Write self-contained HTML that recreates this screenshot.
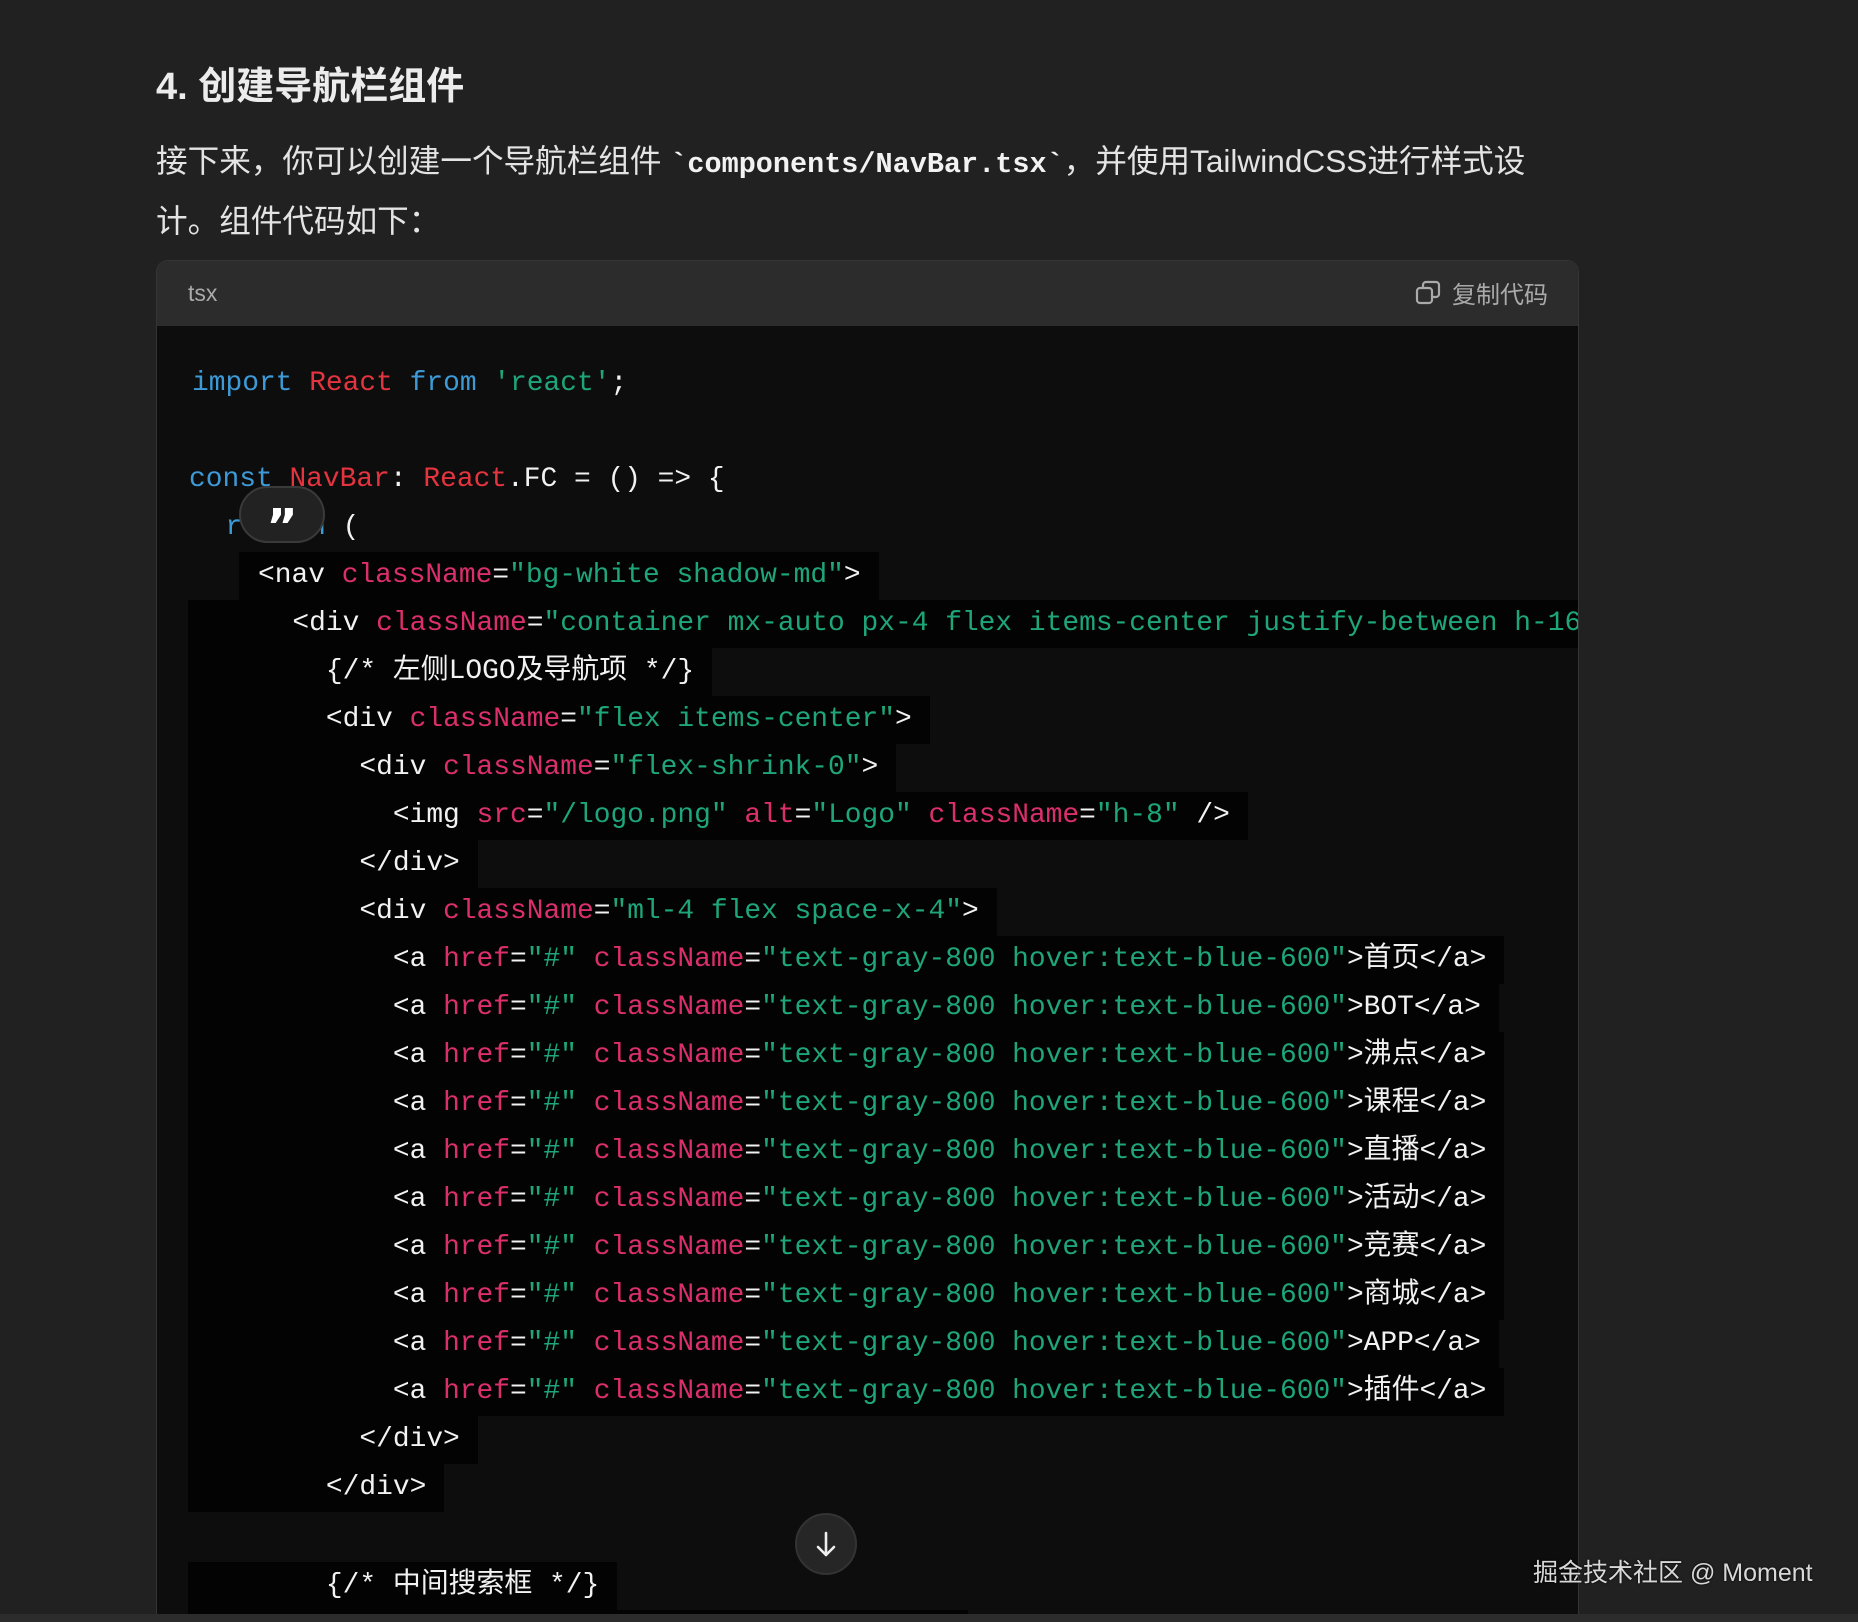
<!DOCTYPE html>
<html style="width:1858px;height:1622px;overflow:hidden"><head><meta charset="utf-8"><style>
*{margin:0;padding:0;box-sizing:border-box}
body{width:1858px;height:1622px;background:#212121;overflow:hidden;position:relative;font-family:"Liberation Sans","Noto Sans CJK SC",sans-serif;color:#e8e8e8}
h1{position:absolute;left:156px;top:64px;font-size:38px;font-weight:bold;color:#ececec;line-height:46px}
.p{position:absolute;left:156px;top:133px;width:1420px;font-size:31.6px;line-height:56px;color:#e4e4e4}
.p code{font-family:"Liberation Mono",monospace;font-weight:bold;font-size:28.5px;color:#f2f2f2}
.blk{position:absolute;left:156px;top:260px;width:1423px;height:1354px;border:1px solid #353535;border-bottom:none;border-radius:12px 12px 0 0;background:#0d0d0d;overflow:hidden}
.hd{height:65px;background:#2c2c2c;position:relative}
.hd .l{position:absolute;left:31px;top:19px;font-size:23px;color:#aaa}
.hd .r{position:absolute;right:30px;top:14px;font-size:24px;color:#aaa;display:flex;align-items:center;gap:10px}
.ln{position:absolute;height:48px;line-height:48px;font-family:"Liberation Mono","Noto Sans CJK SC",monospace;font-size:27.9px;white-space:pre;color:#f2f2f2;padding-left:4px;padding-right:18px}
.bg{background:#030303}
.k{color:#3d9ad6}.r1{color:#e3343f}.a{color:#db2f6b}.s{color:#1ea67a}
.wm{position:absolute;left:1533px;top:1553px;font-size:25px;color:#d8d8d8;text-shadow:0 0 2px #000}
</style></head><body>
<h1>4. 创建导航栏组件</h1>
<div class="p">接下来，你可以创建一个导航栏组件 <code>`components/NavBar.tsx`</code>，并使用TailwindCSS进行样式设计。组件代码如下：</div>
<div class="blk">
<div class="hd"><span class="l">tsx</span><span class="r"><svg width="28" height="28" viewBox="0 0 28 28" fill="none" stroke="#aaa" stroke-width="2.2"><rect x="3" y="9" width="15" height="15" rx="3"/><path d="M9 9V6a3 3 0 0 1 3-3h10a3 3 0 0 1 3 3v9a3 3 0 0 1-3 3h-4"/></svg>复制代码</span></div>
</div>
<div style="position:absolute;left:157px;top:326px;width:1421px;height:1288px;overflow:hidden">
<div style="position:relative;left:-157px;top:-322px">
<div class="ln" style="left:188px;top:356px"><span class="k">import</span> <span class="r1">React</span> <span class="k">from</span> <span class="s">'react'</span>;</div>
<div class="ln" style="left:185px;top:452px"><span class="k">const</span> <span class="r1">NavBar</span>: <span class="r1">React</span>.FC = () =&gt; {</div>
<div class="ln" style="left:188px;top:500px">  <span class="k">return</span> (</div>
<div class="ln bg" style="left:239px;top:548px;padding-left:19px">&lt;nav <span class="a">className</span>=<span class="s">"bg-white shadow-md"</span>&gt;</div>
<div class="ln bg" style="left:188px;top:596px;width:1400px">      &lt;div <span class="a">className</span>=<span class="s">"container mx-auto px-4 flex items-center justify-between h-16"</span>&gt;</div>
<div class="ln bg" style="left:188px;top:644px">        {/* 左侧LOGO及导航项 */}</div>
<div class="ln bg" style="left:188px;top:692px">        &lt;div <span class="a">className</span>=<span class="s">"flex items-center"</span>&gt;</div>
<div class="ln bg" style="left:188px;top:740px">          &lt;div <span class="a">className</span>=<span class="s">"flex-shrink-0"</span>&gt;</div>
<div class="ln bg" style="left:188px;top:788px">            &lt;img <span class="a">src</span>=<span class="s">"/logo.png"</span> <span class="a">alt</span>=<span class="s">"Logo"</span> <span class="a">className</span>=<span class="s">"h-8"</span> /&gt;</div>
<div class="ln bg" style="left:188px;top:836px">          &lt;/div&gt;</div>
<div class="ln bg" style="left:188px;top:884px">          &lt;div <span class="a">className</span>=<span class="s">"ml-4 flex space-x-4"</span>&gt;</div>
<div class="ln bg" style="left:188px;top:932px">            &lt;a <span class="a">href</span>=<span class="s">"#"</span> <span class="a">className</span>=<span class="s">"text-gray-800 hover:text-blue-600"</span>&gt;首页&lt;/a&gt;</div>
<div class="ln bg" style="left:188px;top:980px">            &lt;a <span class="a">href</span>=<span class="s">"#"</span> <span class="a">className</span>=<span class="s">"text-gray-800 hover:text-blue-600"</span>&gt;BOT&lt;/a&gt;</div>
<div class="ln bg" style="left:188px;top:1028px">            &lt;a <span class="a">href</span>=<span class="s">"#"</span> <span class="a">className</span>=<span class="s">"text-gray-800 hover:text-blue-600"</span>&gt;沸点&lt;/a&gt;</div>
<div class="ln bg" style="left:188px;top:1076px">            &lt;a <span class="a">href</span>=<span class="s">"#"</span> <span class="a">className</span>=<span class="s">"text-gray-800 hover:text-blue-600"</span>&gt;课程&lt;/a&gt;</div>
<div class="ln bg" style="left:188px;top:1124px">            &lt;a <span class="a">href</span>=<span class="s">"#"</span> <span class="a">className</span>=<span class="s">"text-gray-800 hover:text-blue-600"</span>&gt;直播&lt;/a&gt;</div>
<div class="ln bg" style="left:188px;top:1172px">            &lt;a <span class="a">href</span>=<span class="s">"#"</span> <span class="a">className</span>=<span class="s">"text-gray-800 hover:text-blue-600"</span>&gt;活动&lt;/a&gt;</div>
<div class="ln bg" style="left:188px;top:1220px">            &lt;a <span class="a">href</span>=<span class="s">"#"</span> <span class="a">className</span>=<span class="s">"text-gray-800 hover:text-blue-600"</span>&gt;竞赛&lt;/a&gt;</div>
<div class="ln bg" style="left:188px;top:1268px">            &lt;a <span class="a">href</span>=<span class="s">"#"</span> <span class="a">className</span>=<span class="s">"text-gray-800 hover:text-blue-600"</span>&gt;商城&lt;/a&gt;</div>
<div class="ln bg" style="left:188px;top:1316px">            &lt;a <span class="a">href</span>=<span class="s">"#"</span> <span class="a">className</span>=<span class="s">"text-gray-800 hover:text-blue-600"</span>&gt;APP&lt;/a&gt;</div>
<div class="ln bg" style="left:188px;top:1364px">            &lt;a <span class="a">href</span>=<span class="s">"#"</span> <span class="a">className</span>=<span class="s">"text-gray-800 hover:text-blue-600"</span>&gt;插件&lt;/a&gt;</div>
<div class="ln bg" style="left:188px;top:1412px">          &lt;/div&gt;</div>
<div class="ln bg" style="left:188px;top:1460px">        &lt;/div&gt;</div>
<div class="ln bg" style="left:188px;top:1558px">        {/* 中间搜索框 */}</div>
<div class="ln bg" style="left:188px;top:1606px;width:780px"> </div>
</div></div>
<div style="position:absolute;left:239px;top:486px;width:86px;height:57px;border-radius:29px;background:#222;border:2px solid #3a3a3a;color:#fff;font:bold 48px/78px 'DejaVu Sans',sans-serif;text-align:center">”</div>
<div style="position:absolute;left:795px;top:1513px;width:62px;height:62px;border-radius:50%;background:#262626;border:2px solid #333"><svg width="58" height="58" viewBox="0 0 58 58" fill="none" stroke="#eee" stroke-width="2.6" stroke-linecap="round" stroke-linejoin="round"><path d="M29 18v22M21 32l8 8 8-8"/></svg></div>
<div style="position:absolute;left:0;top:1614px;width:1858px;height:8px;background:#2c2c2c"></div>
<div class="wm">掘金技术社区 @ Moment</div>
</body></html>
